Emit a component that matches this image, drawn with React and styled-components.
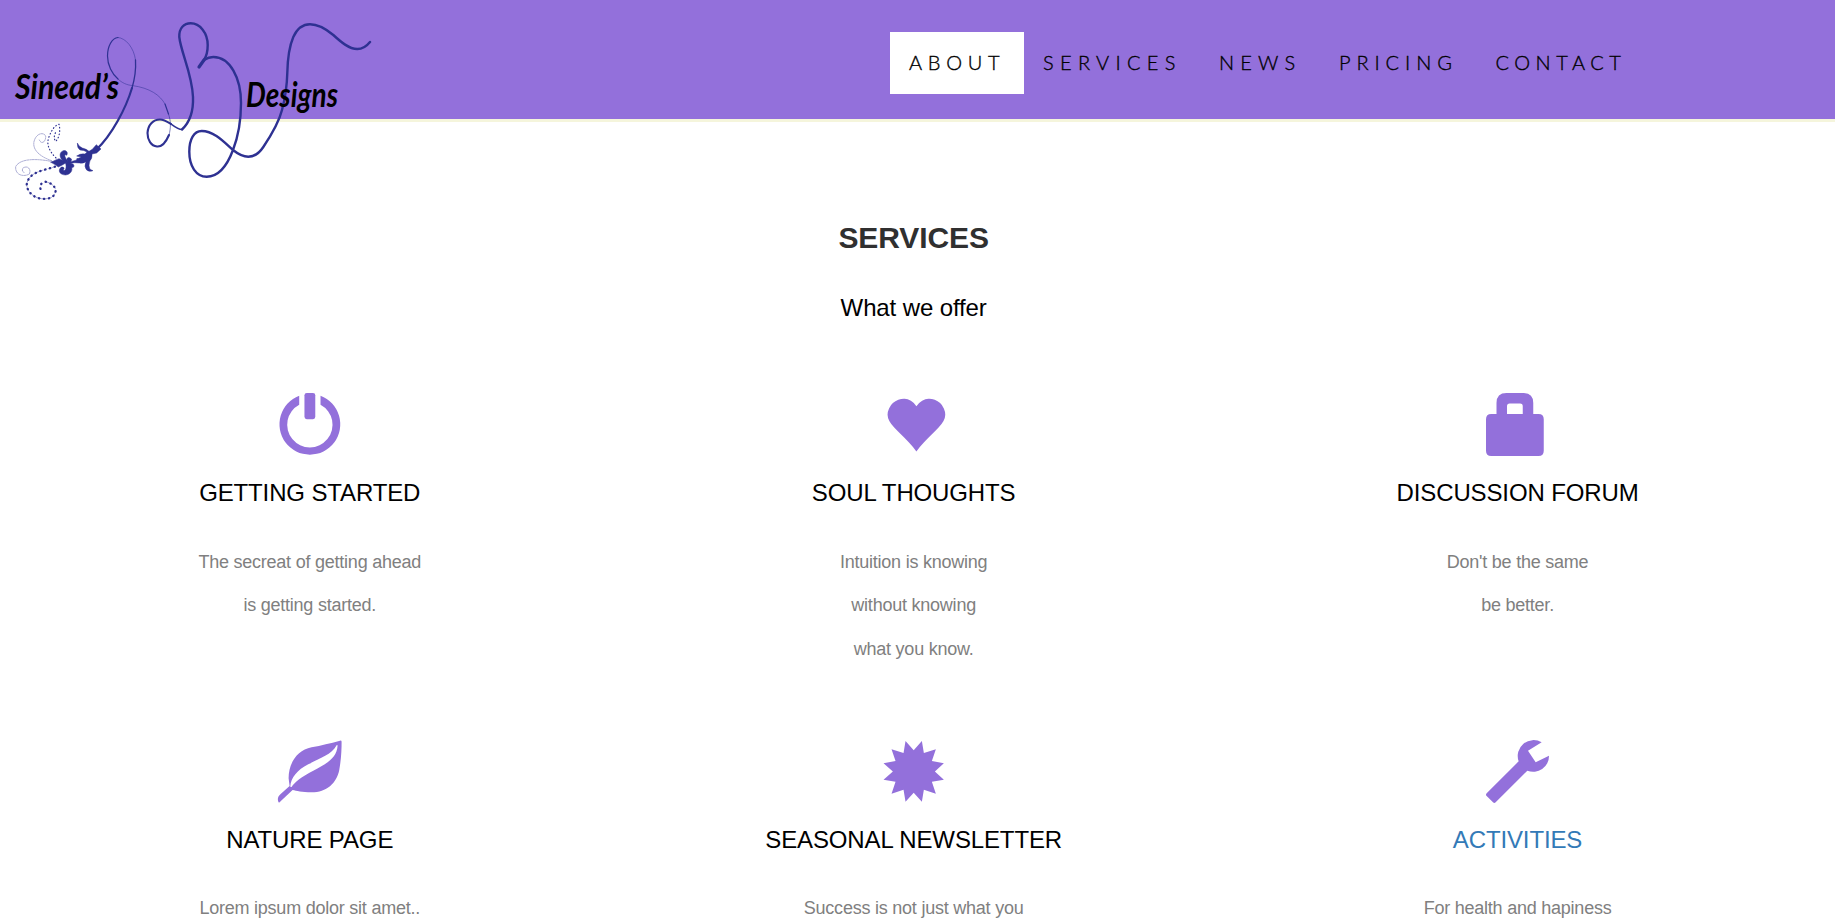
import React from "react";
import styled, { createGlobalStyle } from "styled-components";

const GlobalStyle = createGlobalStyle`
  * { box-sizing: border-box; }
  body {
    margin: 0;
    background: #fff;
    font-family: "Liberation Sans", Arial, sans-serif;
    overflow: hidden;
  }
`;

const Page = styled.div`
  height: 918px;
  overflow: hidden;
`;

const Header = styled.header`
  position: relative;
  display: flex;
  justify-content: flex-end;
  height: 122px;
  padding: 32px 190px 0 0;
  background: mediumpurple;
  border-bottom: 3px solid beige;
`;

const Brand = styled.svg`
  position: absolute;
  top: 0;
  left: 0;
  width: 380px;
  height: 205px;
`;

const BrandText = styled.text`
  font-family: Lato, sans-serif;
  font-style: italic;
  font-weight: 700;
  fill: #000;
`;

const Nav = styled.nav`
  display: flex;
  height: 62px;
`;

const NavLink = styled.a`
  width: ${(p) => p.$width}px;
  padding-left: 19px;
  white-space: nowrap;
  color: #000;
  background: ${(p) => (p.$active ? "#fff" : "transparent")};
  font: 300 20px/60px Lato, sans-serif;
  letter-spacing: ${(p) => p.$spacing}px;
  text-decoration: none;
  -webkit-text-stroke: 0.35px #000;
`;

const Services = styled.section`
  padding: 99px 15.5px 0 7.8px;
  text-align: center;
`;

const Title = styled.h2`
  margin: 0 0 41px;
  color: #303030;
  font-size: 30px;
  line-height: 33px;
  font-weight: 700;
  letter-spacing: -0.1px;
`;

const Subtitle = styled.h4`
  margin: 0 0 72.3px;
  color: #000;
  font-size: 24px;
  line-height: 26px;
  font-weight: 400;
  letter-spacing: -0.12px;
`;

const Grid = styled.div`
  display: grid;
  grid-template-columns: repeat(3, 1fr);
  grid-auto-rows: 346.6px;
`;

const Service = styled.article`
  display: flex;
  flex-direction: column;
  align-items: center;
`;

const Icon = styled.svg`
  flex: none;
  width: 63px;
  height: 63px;
  margin: 0 0 24px;
  fill: mediumpurple;
  overflow: visible;
`;

const Name = styled.h4`
  margin: 0 0 34.4px;
  color: ${(p) => (p.$link ? "#337ab7" : "#000")};
  font-size: 24px;
  line-height: 26px;
  font-weight: 400;
  letter-spacing: -0.13px;
`;

const Text = styled.p`
  margin: 0;
  color: #808080;
  font-size: 18px;
  line-height: 43.4px;
  letter-spacing: -0.23px;
  white-space: pre-line;
`;

const links = [
  { label: "ABOUT", width: 134, spacing: 5.7, active: true },
  { label: "SERVICES", width: 176, spacing: 6.3 },
  { label: "NEWS", width: 120, spacing: 6.2 },
  { label: "PRICING", width: 156.5, spacing: 5.9 },
  { label: "CONTACT", width: 168.5, spacing: 5.5 },
];

const services = [
  {
    name: "GETTING STARTED",
    text: "The secreat of getting ahead\nis getting started.",
    box: "-8 0 1200 1200",
    icon: (
      <>
        <rect x="496" y="0" width="206" height="498" rx="44" />
        <path d="M396 53A579 579 0 1 0 802 53V223A432 432 0 1 1 396 223Z" />
      </>
    ),
  },
  {
    name: "SOUL THOUGHTS",
    text: "Intuition is knowing\nwithout knowing\nwhat you know.",
    box: "-6 0 1200 1200",
    icon: (
      <path
        transform="matrix(1 0 0 -1 0 1200)"
        d="M649 949q48 68 109.5 104t121.5 38.5t118.5 -20t102.5 -64t71 -100.5t27 -123q0 -57 -33.5 -117.5t-94 -124.5t-126.5 -127.5t-150 -152.5t-146 -174q-62 85 -145.5 174t-150 152.5t-126.5 127.5t-93.5 124.5t-33.5 117.5q0 64 28 123t73 100.5t104 64t119 20t120.5 -38.5t104.5 -104z"
      />
    ),
  },
  {
    name: "DISCUSSION FORUM",
    text: "Don't be the same\nbe better.",
    box: "0 0 1200 1200",
    icon: (
      <path
        fillRule="evenodd"
        d="M200 400V190Q200 0 390 0H710Q900 0 900 190V400H1000Q1100 400 1100 500V1100Q1100 1200 1000 1200H100Q0 1200 0 1100V500Q0 400 100 400ZM400 400H700V250Q700 200 650 200H450Q400 200 400 250Z"
      />
    ),
  },
  {
    name: "NATURE PAGE",
    text: "Lorem ipsum dolor sit amet..",
    box: "294.2 60 189 189",
    icon: (
      <path
        fillRule="evenodd"
        d="M485 65Q485 61 480 62C450 70 425 76 395 82C350 92 326 130 326 175L329 198L303 221C291 231 293 240 296 247Q298 249 302 244L338 210C350 212 365 217 395 217C440 217 470 190 478 150C484 115 485 90 485 65ZM470 76C455 104 420 115 385 133C352 150 333 173 331 200L335 201C345 185 364 171 400 152C444 129 470 113 473 77Q472 73 470 76Z"
      />
    ),
  },
  {
    name: "SEASONAL NEWSLETTER",
    text: "Success is not just what you",
    box: "396.4 60 189 189",
    icon: (
      <path d="M467 63L491.5 91L516 63L522 99L558 88L546 123L582 130L555 154.5L582 179L546 185L558 221L522 209L516 245L491.5 218L467 245L461 209L425 221L437 185L401 179L429 154.5L401 130L437 123L425 88L461 99Z" />
    ),
  },
  {
    name: "ACTIVITIES",
    link: true,
    text: "For health and hapiness",
    box: "318 60 189 189",
    icon: (
      <path d="M485 67A47.5 47.5 0 0 0 416 124L320 220Q316 224 320 228L339 247Q343 251 347 247L442 152A47.5 47.5 0 0 0 507 107L467 127L444 92Z" />
    ),
  },
];

function Logo() {
  return (
    <Brand viewBox="0 0 380 205" fill="none" stroke="#2e3192" strokeLinecap="round">
      {/* first swash */}
      <path strokeWidth="2.1" d="M96 150C112 135 126 108 132 88" />
      <path strokeWidth="1.3" d="M132 88C135 78 136 68 135.5 60" />
      <path strokeWidth="0.5" d="M135.5 60C134 48 126 38 118 37.5" />
      <path strokeWidth="1.2" d="M118 37.5C112 38 107.5 46 107.5 56C107.5 65 112 74 118 79" />
      <path strokeWidth="0.5" d="M118 79C122 83 127 85 132 85.5C150 88 160 95 165 104" />
      <path strokeWidth="1.2" d="M165 104L168.5 114" />
      <path strokeWidth="0.6" d="M168.5 114C171 121 171 128 169 135" />
      {/* letter swash */}
      <path
        strokeWidth="2.1"
        d="M169 135C166 142 162 147 157 146.5C151 146 147.5 140 147.5 133C148 125 153 119.5 160 119.5C164 119.5 167 121.5 171 124"
      />
      <path strokeWidth="1.5" d="M171 124C175 127 178 129.5 182 129.5" />
      <path
        strokeWidth="2.4"
        d="M182 129.5C190 122 193.5 110 193 97C192 73 181 53 179.3 37C179 28 184 23.3 190.7 23.3C200 23.3 207.7 33 207.7 45C207.7 52 206 57 204 60"
      />
      <path strokeWidth="3.2" d="M204 60L199 67" />
      <path
        strokeWidth="2.4"
        d="M204 60C207 58 210 57 213.3 57C230 57 241 78 241 103C241 120 238 137 233 150C227 166 218 176.7 206.7 176.7C196 176.7 189.3 166 189.3 151.7C189.3 139 194 131 201.7 131C214 131 224 142 233 150C238 154 243 156.7 248.3 156.7C255 156.7 260 152 263.3 147C272 134 279 122 282 110C286 95 287 85 287.3 73C287.6 58 289 47 293.3 37C297 29 303 24.3 310 24.3C318 24.3 326 29 333.3 35C341 42 349 49 357.3 49C362 49 366 47 370 42"
      />
      {/* floral ornament */}
      <g transform="scale(.33333)">
        <path strokeWidth="3.5" strokeDasharray="2 8" d="M168 474C145 450 138 430 148 408C155 390 165 375 177 373C182 390 178 415 167 424C160 415 163 405 168 395" />
        <path strokeWidth="1.2" strokeDasharray="4 3" d="M155 482C120 470 97 450 102 425C108 400 130 395 137 408C138 425 125 435 118 420" />
        <path strokeWidth="1.2" strokeDasharray="5 3" d="M158 485C110 475 60 475 47 500C45 525 70 532 88 522C95 505 80 495 68 505Q65 515 72 517" />
        <path strokeWidth="7" strokeDasharray="1 14" d="M165 500C130 512 85 515 80 555C85 590 125 605 155 592C178 575 165 550 135 545C118 550 118 565 125 572" />
        <path strokeWidth="1.3" strokeDasharray="8 5" d="M165 500C130 512 85 515 80 555C85 590 125 605 155 592C178 575 165 550 135 545" />
        <g fill="#2e3192" stroke="#2e3192" strokeWidth="1.5">
          <path d="M153 487Q167 479 177 476Q188 480 202 486Q188 495 175 501Q166 494 153 487Z" />
          <path d="M200 487C178 482 174 457 190 452C200 450 205 459 200 466C194 461 190 468 204 484Z" />
          <path d="M201 489C224 498 219 523 196 525C178 524 173 511 183 502C189 499 196 504 190 509C191 514 202 512 197 490Z" />
          <path d="M202 484Q198 471 209 473Q219 476 212 485L230 480Q228 474 236 475L244 471Q235 470 230 468Q242 460 254 462Q258 461 261 456Q252 450 240 450Q231 444 232 429Q236 440 247 444Q260 447 267 454L277 448L289 434L303 447L290 459L276 462Q277 476 270 482Q264 497 270 508L279 512Q267 517 260 510Q251 500 258 485Q249 491 239 489L224 488L211 490Q225 492 221 501Q210 506 206 496L198 490Z" />
        </g>
      </g>
      <g stroke="none">
        <BrandText x="15" y="99" fontSize="34" textLength="104" lengthAdjust="spacingAndGlyphs">Sinead’s</BrandText>
        <BrandText x="246" y="107" fontSize="35" textLength="92" lengthAdjust="spacingAndGlyphs">Designs</BrandText>
      </g>
    </Brand>
  );
}

export default function App() {
  return (
    <Page>
      <GlobalStyle />
      <Header>
        <Logo />
        <Nav>
          {links.map((l) => (
            <NavLink key={l.label} $active={l.active} $width={l.width} $spacing={l.spacing}>
              {l.label}
            </NavLink>
          ))}
        </Nav>
      </Header>
      <Services>
        <Title>SERVICES</Title>
        <Subtitle>What we offer</Subtitle>
        <Grid>
          {services.map((s) => (
            <Service key={s.name}>
              <Icon viewBox={s.box}>{s.icon}</Icon>
              <Name $link={s.link}>{s.name}</Name>
              <Text>{s.text}</Text>
            </Service>
          ))}
        </Grid>
      </Services>
    </Page>
  );
}
